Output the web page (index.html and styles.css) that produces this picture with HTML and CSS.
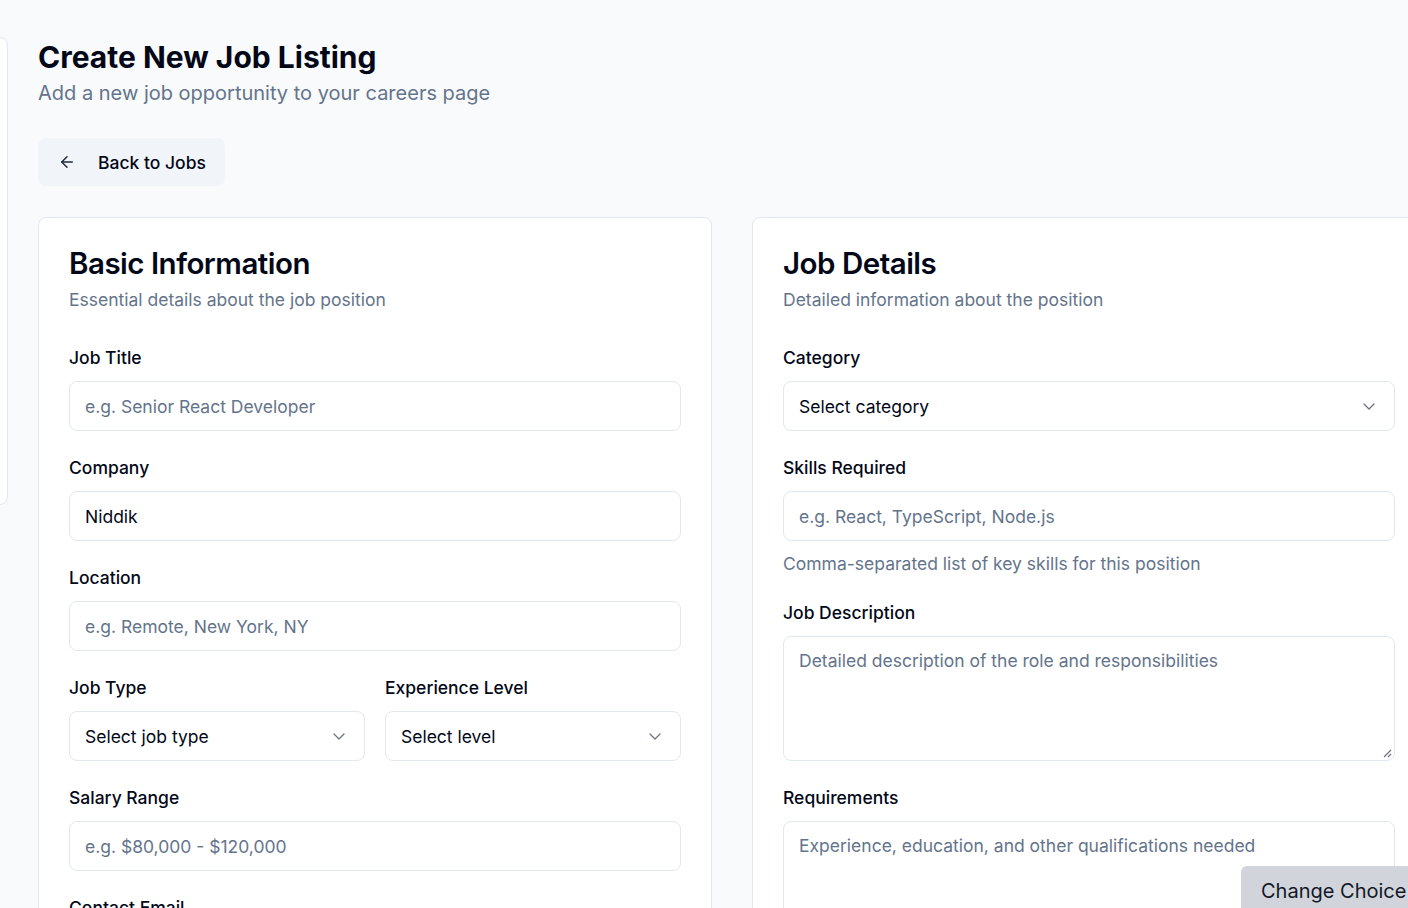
FILE: index.html
```html
<!DOCTYPE html>
<html lang="en">
<head>
<meta charset="utf-8">
<title>Create New Job Listing</title>
<link rel="stylesheet" href="styles.css">
</head>
<body>
<div class="layout">
  <aside class="side-panel"></aside>
  <main class="main">
    <header class="page-head">
      <h1 class="page-title">Create New Job Listing</h1>
      <p class="page-sub">Add a new job opportunity to your careers page</p>
    </header>
    <button class="back-btn" type="button">
      <svg class="back-icon" width="18" height="18" viewBox="0 0 24 24" fill="none" stroke="currentColor" stroke-width="2" stroke-linecap="round" stroke-linejoin="round"><path d="m12 19-7-7 7-7"/><path d="M19 12H5"/></svg>
      <span>Back to Jobs</span>
    </button>
    <div class="cards">
      <section class="card">
        <div class="card-head">
          <h2 class="card-title">Basic Information</h2>
          <p class="card-desc">Essential details about the job position</p>
        </div>
        <div class="field">
          <label class="label">Job Title</label>
          <div class="input placeholder">e.g. Senior React Developer</div>
        </div>
        <div class="field">
          <label class="label">Company</label>
          <div class="input">Niddik</div>
        </div>
        <div class="field">
          <label class="label">Location</label>
          <div class="input placeholder">e.g. Remote, New York, NY</div>
        </div>
        <div class="field-row">
          <div class="field">
            <label class="label">Job Type</label>
            <div class="input select"><span>Select job type</span>
              <svg class="chev" width="12" height="7" viewBox="0 0 12 7" fill="none" stroke="currentColor" stroke-width="1.3" stroke-linecap="round" stroke-linejoin="round"><path d="M1 1l5 5 5-5"/></svg>
            </div>
          </div>
          <div class="field">
            <label class="label">Experience Level</label>
            <div class="input select"><span>Select level</span>
              <svg class="chev" width="12" height="7" viewBox="0 0 12 7" fill="none" stroke="currentColor" stroke-width="1.3" stroke-linecap="round" stroke-linejoin="round"><path d="M1 1l5 5 5-5"/></svg>
            </div>
          </div>
        </div>
        <div class="field">
          <label class="label">Salary Range</label>
          <div class="input placeholder">e.g. $80,000 - $120,000</div>
        </div>
        <div class="field">
          <label class="label">Contact Email</label>
          <div class="input placeholder">e.g. careers@niddik.com</div>
        </div>
      </section>
      <section class="card">
        <div class="card-head">
          <h2 class="card-title">Job Details</h2>
          <p class="card-desc">Detailed information about the position</p>
        </div>
        <div class="field">
          <label class="label">Category</label>
          <div class="input select"><span>Select category</span>
            <svg class="chev" width="12" height="7" viewBox="0 0 12 7" fill="none" stroke="currentColor" stroke-width="1.3" stroke-linecap="round" stroke-linejoin="round"><path d="M1 1l5 5 5-5"/></svg>
          </div>
        </div>
        <div class="field field-hinted">
          <label class="label">Skills Required</label>
          <div class="input placeholder">e.g. React, TypeScript, Node.js</div>
          <p class="hint">Comma-separated list of key skills for this position</p>
        </div>
        <div class="field">
          <label class="label">Job Description</label>
          <div class="input textarea placeholder">Detailed description of the role and responsibilities
            <svg class="grip" width="9" height="9" viewBox="0 0 9 9" fill="none" stroke="#6b7280" stroke-width="1.2"><path d="M8 1 1 8M8 5 5 8"/></svg>
          </div>
        </div>
        <div class="field">
          <label class="label">Requirements</label>
          <div class="input textarea placeholder">Experience, education, and other qualifications needed</div>
        </div>
      </section>
    </div>
  </main>
</div>
<button class="change-choice" type="button">Change Choice</button>
</body>
</html>
```
FILE: styles.css
```css
* { box-sizing: border-box; }
html, body { margin: 0; padding: 0; }
body {
  background: #f8fafc;
  font-family: Inter, "Noto Sans", Arial, sans-serif;
  color: #020817;
  width: 1408px;
  height: 908px;
  overflow: hidden;
}
.layout {
  display: flex;
  align-items: flex-start;
}
.side-panel {
  flex: 0 0 240px;
  margin-left: -232px;
  margin-top: 37px;
  height: 468px;
  background: #fff;
  border: 1px solid #e2e8f0;
  border-radius: 8px;
}
.main {
  flex: 0 0 auto;
  padding-left: 30px;
  padding-top: 39px;
}
.page-title {
  margin: 0;
  font-size: 30px;
  line-height: 36px;
  font-weight: 700;
}
.page-sub {
  margin: 4px 0 0;
  font-size: 20px;
  line-height: 28px;
  color: #64748b;
}
.back-btn {
  margin-top: 31px;
  height: 48px;
  display: inline-flex;
  align-items: center;
  gap: 22px;
  padding: 0 19px 0 20px;
  border: 0;
  border-radius: 8px;
  background: #f1f5f9;
  font-family: inherit;
  font-size: 17.5px;
  font-weight: 500;
  color: #020817;
}
.back-icon { color: #1e293b; }
.cards {
  margin-top: 31px;
  display: grid;
  grid-template-columns: 674px 674px;
  gap: 40px;
}
.card {
  background: #fff;
  border: 1px solid #e2e8f0;
  border-radius: 8px;
  padding: 27px 30px 30px;
  height: 720px;
}
.card-head { margin-bottom: 30px; }
.card-title {
  margin: 0;
  font-size: 29.5px;
  line-height: 36px;
  font-weight: 600;
  letter-spacing: -0.5px;
}
.card-desc {
  margin: 5px 0 0;
  font-size: 17.5px;
  line-height: 28px;
  color: #64748b;
}
.field { margin-bottom: 23px; }
.field-hinted { margin-bottom: 21px; }
.field-row {
  display: grid;
  grid-template-columns: 1fr 1fr;
  gap: 20px;
}
.label {
  display: block;
  font-size: 17.5px;
  line-height: 28px;
  font-weight: 500;
  margin-bottom: 9px;
}
.input {
  height: 50px;
  border: 1px solid #e2e8f0;
  border-radius: 8px;
  background: #fff;
  padding: 0 15px;
  display: flex;
  align-items: center;
  font-size: 17.5px;
  color: #020817;
}
.placeholder { color: #64748b; }
.select { justify-content: space-between; padding-right: 19px; }
.chev { color: #6b7280; }
.textarea {
  position: relative;
  height: 125px;
  align-items: flex-start;
  padding-top: 12px;
  line-height: 24px;
}
.grip {
  position: absolute;
  right: 2px;
  bottom: 2px;
}
.hint {
  margin: 9px 0 0;
  font-size: 17.5px;
  line-height: 28px;
  color: #64748b;
}
.change-choice {
  position: fixed;
  left: 1241px;
  top: 866px;
  padding: 11px 24px 11px 20px;
  border: 0;
  border-radius: 6px 0 0 0;
  background: #d1d5db;
  font-family: inherit;
  font-size: 20px;
  line-height: 28px;
  color: #111827;
  white-space: nowrap;
}
```
